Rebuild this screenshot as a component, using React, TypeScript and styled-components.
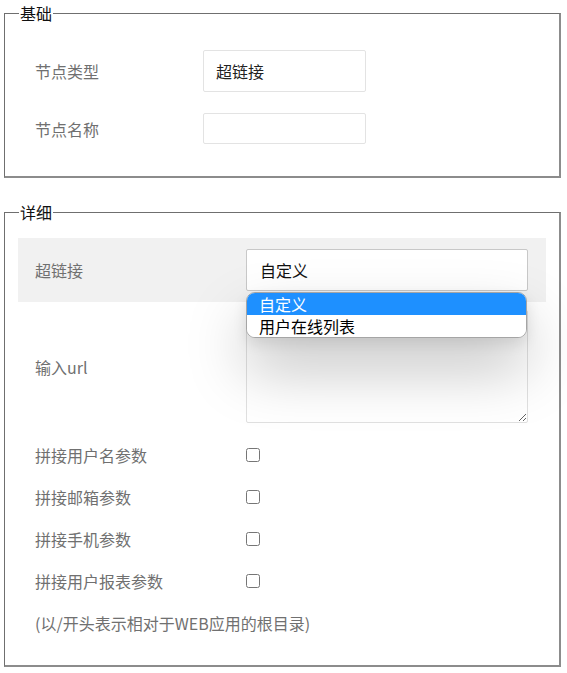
import styled, { createGlobalStyle } from "styled-components";

const GlobalStyle = createGlobalStyle`
  html, body {
    margin: 0;
    padding: 0;
    background: #fff;
  }
  body {
    font-family: "Noto Sans CJK SC", "Noto Sans", sans-serif;
    font-size: 16px;
  }
`;

const Page = styled.div`
  padding: 3px 6px 0 4px;
`;

const Group = styled.fieldset<{ $top?: number; $padTop: number; $padBottom: number }>`
  margin: ${(p) => p.$top ?? 0}px 0 0 0;
  padding: ${(p) => p.$padTop}px 13px ${(p) => p.$padBottom}px 13px;
  border-style: solid;
  border-width: 1px 2px 2px 1px;
  border-color: #6f6f6f #8c8c8c #8c8c8c #6f6f6f;
  min-width: 0;
`;

const Legend = styled.legend`
  padding: 0 1px;
  margin-left: 1px;
  font-size: 16px;
  line-height: 20px;
  color: #111;
`;

const Row = styled.div<{ $shaded?: boolean; $height?: number; $labelWidth: number }>`
  display: grid;
  grid-template-columns: ${(p) => p.$labelWidth}px 1fr;
  align-items: center;
  padding: 0 17px;
  height: ${(p) => (p.$height ? `${p.$height}px` : "auto")};
  background: ${(p) => (p.$shaded ? "#f1f1f1" : "transparent")};
`;

const Label = styled.span`
  color: #707070;
  font-size: 16px;
  line-height: 20px;
`;

const TextInput = styled.input<{ $height: number }>`
  box-sizing: border-box;
  width: 163px;
  height: ${(p) => p.$height}px;
  margin: 0;
  padding: 0 12px;
  border: 1px solid #e3e3e3;
  border-radius: 2px;
  font: inherit;
  font-size: 16px;
  color: #222;
  outline: none;
`;

const BasicRows = styled.div`
  display: flex;
  flex-direction: column;
  gap: 21px;
`;

const SelectWrap = styled.div`
  position: relative;
  width: 282px;
`;

const SelectBox = styled.div`
  box-sizing: border-box;
  width: 282px;
  height: 42px;
  padding: 0 13px;
  display: flex;
  align-items: center;
  background: #fff;
  border: 1px solid #c8c8c8;
  border-radius: 2px;
  font-size: 16px;
  color: #111;
`;

const Dropdown = styled.div`
  position: absolute;
  top: 43px;
  left: 0;
  width: 281px;
  box-sizing: border-box;
  border: 1px solid #a5a5a5;
  border-radius: 9px;
  background: #fff;
  overflow: hidden;
  z-index: 2;
  box-shadow: 0 30px 60px rgba(0, 0, 0, 0.26), 0 6px 14px rgba(0, 0, 0, 0.1);
`;

const Option = styled.div<{ $active?: boolean }>`
  height: 22px;
  line-height: 22px;
  padding-left: 12px;
  font-size: 16px;
  color: ${(p) => (p.$active ? "#fff" : "#000")};
  background: ${(p) => (p.$active ? "#1e90ff" : "#fff")};
`;

const UrlRow = styled(Row)`
  padding-top: 8px;
  padding-bottom: 11px;
`;

const TextArea = styled.textarea`
  box-sizing: border-box;
  width: 282px;
  height: 113px;
  margin: 0;
  border: 1px solid #e0e0e0;
  border-radius: 2px;
  font: inherit;
  outline: none;
  display: block;
`;

const Check = styled.input`
  width: 14px;
  height: 14px;
  margin: 0;
  display: block;
`;

const Note = styled.div`
  height: 42px;
  display: flex;
  align-items: center;
  padding-left: 17px;
  color: #707070;
  font-size: 16px;
  line-height: 20px;
`;

const params = ["拼接用户名参数", "拼接邮箱参数", "拼接手机参数", "拼接用户报表参数"];

function App() {
  return (
    <Page>
      <GlobalStyle />
      <Group $padTop={27} $padBottom={32}>
        <Legend>基础</Legend>
        <BasicRows>
          <Row $labelWidth={168} $height={42}>
            <Label>节点类型</Label>
            <TextInput $height={42} defaultValue="超链接" />
          </Row>
          <Row $labelWidth={168} $height={31}>
            <Label>节点名称</Label>
            <TextInput $height={31} />
          </Row>
        </BasicRows>
      </Group>
      <Group $top={24} $padTop={16} $padBottom={21}>
        <Legend>详细</Legend>
        <Row $labelWidth={211} $height={64} $shaded>
          <Label>超链接</Label>
          <SelectWrap>
            <SelectBox>自定义</SelectBox>
            <Dropdown>
              <Option $active>自定义</Option>
              <Option>用户在线列表</Option>
            </Dropdown>
          </SelectWrap>
        </Row>
        <UrlRow $labelWidth={211}>
          <Label>输入url</Label>
          <TextArea />
        </UrlRow>
        {params.map((p) => (
          <Row key={p} $labelWidth={211} $height={42}>
            <Label>{p}</Label>
            <div>
              <Check type="checkbox" />
            </div>
          </Row>
        ))}
        <Note>(以/开头表示相对于WEB应用的根目录)</Note>
      </Group>
    </Page>
  );
}

export default App;
